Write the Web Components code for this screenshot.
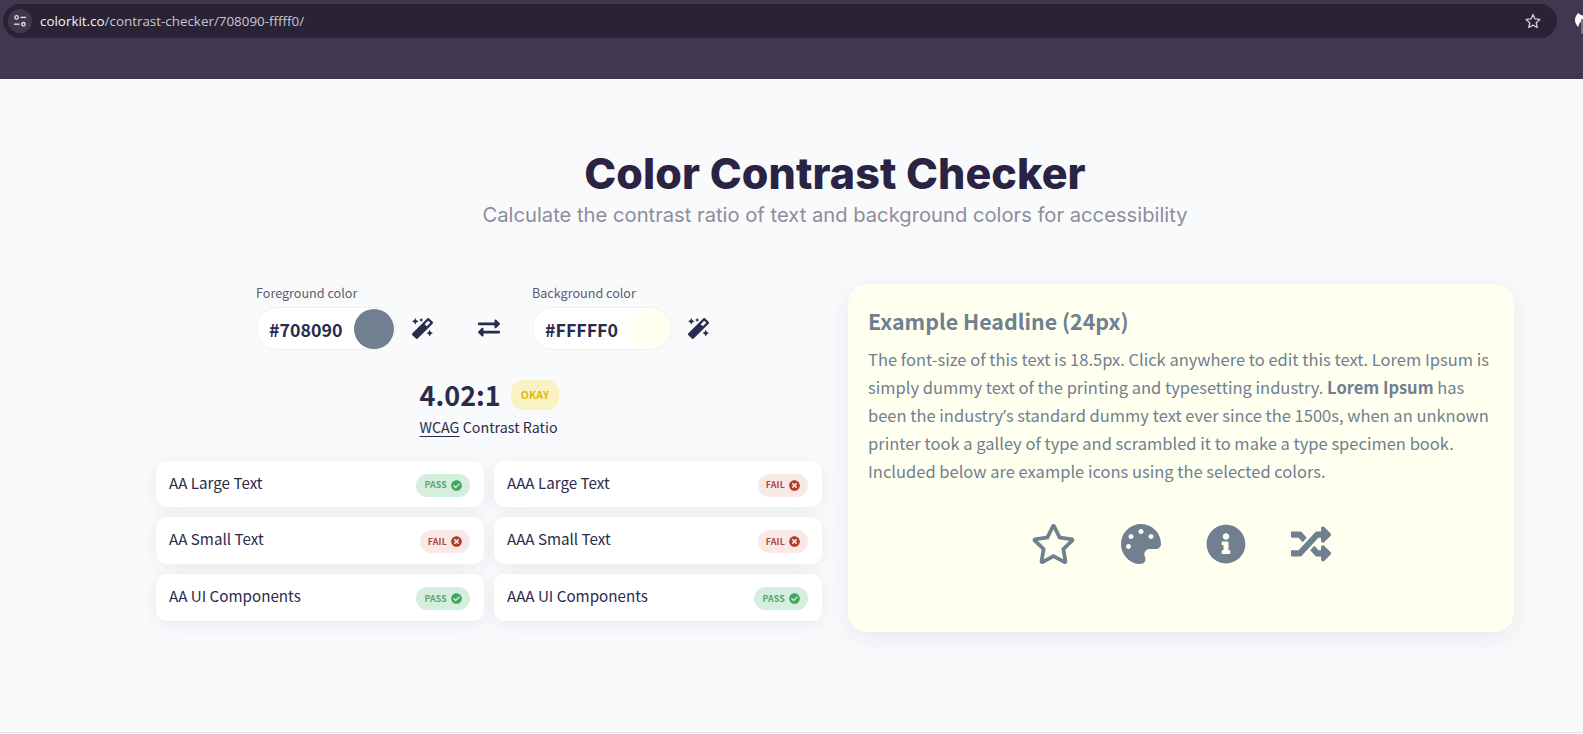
<!DOCTYPE html>
<html lang="en">
<head>
<meta charset="utf-8">
<title>Color Contrast Checker</title>
<style>
  html, body { margin: 0; height: 100%; }
  body {
    height: 734px;
    overflow: hidden;
    background: #f9fafc;
    font-family: "Noto Sans CJK SC", "Noto Sans", sans-serif;
    color: #2b2a4c;
  }
</style>
</head>
<body>
<browser-bar url-host="colorkit.co" url-path="/contrast-checker/708090-fffff0/"></browser-bar>
<page-hero heading="Color Contrast Checker" sub="Calculate the contrast ratio of text and background colors for accessibility"></page-hero>
<checker-layout>
  <checker-panel slot="left"></checker-panel>
  <preview-card slot="right"></preview-card>
</checker-layout>
<page-foot></page-foot>

<script>
const ICONS = {
  check: [512, 'M504 256c0 136.967-111.033 248-248 248S8 392.967 8 256 119.033 8 256 8s248 111.033 248 248zM227.314 387.314l184-184c6.248-6.248 6.248-16.379 0-22.627l-22.627-22.627c-6.248-6.249-16.379-6.249-22.628 0L216 308.118l-70.059-70.059c-6.248-6.248-16.379-6.248-22.628 0l-22.627 22.627c-6.248 6.248-6.248 16.379 0 22.627l104 104c6.249 6.249 16.379 6.249 22.628.001z'],
  times: [512, 'M256 8C119 8 8 119 8 256s111 248 248 248 248-111 248-248S393 8 256 8zm121.6 313.1c4.7 4.7 4.7 12.3 0 17L338 377.6c-4.7 4.7-12.3 4.7-17 0L256 312l-65.1 65.6c-4.7 4.7-12.3 4.7-17 0L134.4 338c-4.7-4.7-4.7-12.3 0-17l65.6-65-65.6-65.1c-4.7-4.7-4.7-12.3 0-17l39.6-39.6c4.7-4.7 12.3-4.7 17 0l65 65.7 65.1-65.6c4.7-4.7 12.3-4.7 17 0l39.6 39.6c4.7 4.7 4.7 12.3 0 17L312 256l65.6 65.1z'],
  star: [576, 'M528.1 171.5L382 150.2 316.7 17.8c-11.7-23.6-45.6-23.9-57.4 0L194 150.2 47.9 171.5c-26.2 3.8-36.7 36.1-17.7 54.6l105.7 103-25 145.5c-4.5 26.3 23.2 46 46.4 33.7L288 439.6l130.7 68.7c23.2 12.2 50.9-7.4 46.4-33.7l-25-145.5 105.7-103c19-18.5 8.5-50.8-17.7-54.6zM388.6 312.3l23.7 138.4L288 385.4l-124.3 65.3 23.7-138.4-100.6-98 139-20.2 62.2-126 62.2 126 139 20.2-100.6 98z'],
  palette: [512, 'M204.3 5C104.9 24.4 24.8 104.3 5.2 203.4c-37 187 131.7 326.4 258.8 306.7 41.2-6.4 61.4-54.6 42.5-91.7-23.1-45.4 9.9-98.4 60.9-98.4h79.7c35.8 0 64.8-29.6 64.9-65.3C511.5 97.1 368.1-26.9 204.3 5zM96 320c-17.7 0-32-14.3-32-32s14.3-32 32-32 32 14.3 32 32-14.3 32-32 32zm32-128c-17.7 0-32-14.3-32-32s14.3-32 32-32 32 14.3 32 32-14.3 32-32 32zm128-64c-17.7 0-32-14.3-32-32s14.3-32 32-32 32 14.3 32 32-14.3 32-32 32zm128 64c-17.7 0-32-14.3-32-32s14.3-32 32-32 32 14.3 32 32-14.3 32-32 32z'],
  info: [512, 'M256 8C119.043 8 8 119.083 8 256c0 136.997 111.043 248 248 248s248-111.003 248-248C504 119.083 392.957 8 256 8zm0 110c23.196 0 42 18.804 42 42s-18.804 42-42 42-42-18.804-42-42 18.804-42 42-42zm56 254c0 6.627-5.373 12-12 12h-88c-6.627 0-12-5.373-12-12v-24c0-6.627 5.373-12 12-12h12v-64h-12c-6.627 0-12-5.373-12-12v-24c0-6.627 5.373-12 12-12h64c6.627 0 12 5.373 12 12v100h12c6.627 0 12 5.373 12 12v24z'],
  random: [512, 'M504.971 359.029c9.373 9.373 9.373 24.569 0 33.941l-80 79.984c-15.01 15.01-40.971 4.49-40.971-16.971V416h-58.785a12.004 12.004 0 0 1-8.773-3.812l-70.556-75.596 53.333-57.143L352 336h32v-39.981c0-21.438 25.943-31.998 40.971-16.971l80 79.981zM12 176h84l52.781 56.551 53.333-57.143-70.556-75.596A11.999 11.999 0 0 0 122.785 96H12c-6.627 0-12 5.373-12 12v56c0 6.627 5.373 12 12 12zm372 0v39.984c0 21.46 25.961 31.98 40.971 16.971l80-79.984c9.373-9.373 9.373-24.569 0-33.941l-80-79.981C409.943 24.021 384 34.582 384 56.019V96h-58.785a12.004 12.004 0 0 0-8.773 3.812L96 336H12c-6.627 0-12 5.373-12 12v56c0 6.627 5.373 12 12 12h110.785c3.326 0 6.503-1.381 8.773-3.812L352 176h32z'],
  exchange: [512, 'M0 168v-16c0-13.255 10.745-24 24-24h360V80c0-21.367 25.899-32.042 40.971-16.971l80 80c9.372 9.373 9.372 24.569 0 33.941l-80 80C409.956 271.982 384 261.456 384 240v-48H24c-13.255 0-24-10.745-24-24zm488 152H128v-48c0-21.314-25.862-32.08-40.971-16.971l-80 80c-9.372 9.373-9.372 24.569 0 33.941l80 80C102.057 463.997 128 453.437 128 432v-48h360c13.255 0 24-10.745 24-24v-16c0-13.255-10.745-24-24-24z'],
  magic: [512, 'M224 96l16-32 32-16-32-16-16-32-16 32-32 16 32 16 16 32zM80 160l26.66-53.33L160 80l-53.34-26.67L80 0 53.34 53.33 0 80l53.34 26.67L80 160zm352 128l-26.66 53.33L352 368l53.34 26.67L432 448l26.66-53.33L512 368l-53.34-26.67L432 288zm70.62-193.77L417.77 9.38C411.53 3.12 403.34 0 395.15 0c-8.19 0-16.38 3.12-22.63 9.38L9.38 372.52c-12.5 12.5-12.5 32.76 0 45.25l84.85 84.85c6.25 6.25 14.44 9.37 22.62 9.37 8.19 0 16.38-3.12 22.63-9.37l363.14-363.15c12.5-12.48 12.5-32.75 0-45.24zM359.45 203.46l-50.91-50.91 86.6-86.6 50.91 50.91-86.6 86.6z']
};

// Solid icon helper, size is the height in px, width follows the glyph
function icon(name, size) {
  const [w, d] = ICONS[name];
  return `<svg xmlns="http://www.w3.org/2000/svg" viewBox="0 0 ${w} 512" width="${w * size / 512}" height="${size}" fill="currentColor" style="display:block;flex:none"><path d="${d}"/></svg>`;
}

class BrowserBar extends HTMLElement {
  connectedCallback() {
    this.attachShadow({ mode: 'open' }).innerHTML = `
      <style>
        :host { display: block; height: 79px; background: #3f384f; padding: 4px 0 0 3px; box-sizing: border-box; position: relative; overflow: hidden; }
        .pill { width: 1554px; height: 34px; box-sizing: border-box; background: #2a2335; border-radius: 17px; display: flex; align-items: center; padding: 0 16px 0 5px; }
        .site { width: 24px; height: 24px; border-radius: 50%; background: #3f384f; display: flex; align-items: center; justify-content: center; color: #e6e3ea; }
        .url { margin-left: 8px; font: 13.4px/20px "Open Sans", sans-serif; color: #c9c6d2; white-space: nowrap; flex: 1; }
        .url b { font-weight: 400; color: #f6f4f8; }
        .star { color: #cfcbd6; }
        .ext { position: absolute; left: 1575px; top: 13px; }
      </style>
      <div class="pill">
        <span class="site">
          <svg width="14" height="14" viewBox="0 0 14 14" fill="none" stroke="currentColor" stroke-width="1.3">
            <circle cx="3.6" cy="3.4" r="1.7"/><path d="M7.4 3.4H13"/>
            <circle cx="10.4" cy="10.2" r="1.7"/><path d="M1 10.2H6.6"/>
          </svg>
        </span>
        <span class="url"><b>${this.getAttribute('url-host')}</b>${this.getAttribute('url-path')}</span>
        <svg class="star" width="16" height="16" viewBox="0 0 16 16" fill="none" stroke="currentColor" stroke-width="1.3" stroke-linejoin="round"><path d="M8 1.4l2 4.5 4.9.5-3.7 3.3 1.1 4.8L8 12.1l-4.3 2.4 1.1-4.8L1.100 6.400 6 5.900z"/></svg>
      </div>
      <svg class="ext" width="8" height="21" viewBox="0 0 8 21"><path d="M3.500 0C1.500 1.500 0 4 0 7c0 3 1.500 5.500 3.500 7 .2-3 1.500-5.500 4.500-6.500V2.500C6.500 2.500 4.500 1.500 3.500 0z" fill="#fff"/><rect x="6" y="6" width="2" height="15" fill="#77737f"/></svg>`;
  }
}
customElements.define('browser-bar', BrowserBar);

class PageHero extends HTMLElement {
  connectedCallback() {
    this.attachShadow({ mode: 'open' }).innerHTML = `
      <style>
        :host { display: block; margin-left: 156px; width: 1358px; padding-top: 69px; text-align: center; }
        h1 { margin: 0; font: 800 43px/50px Inter, sans-serif; color: #2a2344; letter-spacing: .1px; }
        p { margin: 3px 0 0; font: 400 20.2px/27px Inter, sans-serif; color: #8f8c9c; }
      </style>
      <h1>${this.getAttribute('heading')}</h1>
      <p>${this.getAttribute('sub')}</p>`;
  }
}
customElements.define('page-hero', PageHero);

class CheckerLayout extends HTMLElement {
  connectedCallback() {
    this.attachShadow({ mode: 'open' }).innerHTML = `
      <style>
        :host { display: grid; grid-template-columns: 666px 666px; column-gap: 26px; margin: 56px 0 0 156px; width: 1358px; }
      </style>
      <slot name="left"></slot>
      <slot name="right"></slot>`;
  }
}
customElements.define('checker-layout', CheckerLayout);

class ColorField extends HTMLElement {
  connectedCallback() {
    const value = this.getAttribute('value');
    const swatch = this.getAttribute('swatch');
    this.attachShadow({ mode: 'open' }).innerHTML = `
      <style>
        :host { display: block; }
        label { display: block; font-size: 12.600px; line-height: 18px; color: #5d5b70; margin: 0 0 5px 0; }
        .row { display: flex; align-items: center; gap: 16px; }
        .pill { width: 140px; height: 43px; box-sizing: border-box; border: 1px solid #eff0f3; border-radius: 22px; background: #fff; display: flex; align-items: center; justify-content: space-between; padding: 0 1px 0 12px; }
        .hex { font-size: 17.800px; font-weight: 700; line-height: 24px; color: #2b2a4c; }
        .dot { width: 40px; height: 40px; border-radius: 50%; background: ${swatch}; }
        .wand { color: #2b2a4c; }
      </style>
      <label>${this.getAttribute('label')}</label>
      <div class="row">
        <div class="pill"><span class="hex">${value}</span><span class="dot"></span></div>
        <span class="wand">${icon('magic', 21)}</span>
      </div>`;
  }
}
customElements.define('color-field', ColorField);

class StatusBadge extends HTMLElement {
  connectedCallback() {
    const pass = this.getAttribute('status') === 'pass';
    this.attachShadow({ mode: 'open' }).innerHTML = `
      <style>
        :host { display: flex; align-items: center; gap: 4px; height: 23px; padding: 0 8px; border-radius: 12px; font-size: 8.800px; font-weight: 700; letter-spacing: .2px; background: ${pass ? '#d5eedd' : '#f8e8e6'}; color: ${pass ? '#5aa86e' : '#ab4a3f'}; }
        span { line-height: 14px; }
        i { display: block; color: ${pass ? '#3fa85c' : '#b53a2a'}; }
      </style>
      <span>${pass ? 'PASS' : 'FAIL'}</span><i>${icon(pass ? 'check' : 'times', 11)}</i>`;
  }
}
customElements.define('status-badge', StatusBadge);

class CheckRow extends HTMLElement {
  connectedCallback() {
    this.attachShadow({ mode: 'open' }).innerHTML = `
      <style>
        :host { display: flex; align-items: center; justify-content: space-between; box-sizing: border-box; padding: 0 14px 0 13px; background: #fff; border-radius: 11px; box-shadow: 0 4px 16px rgba(40, 40, 70, .07); }
        .name { align-self: flex-start; font-size: 15.200px; line-height: 22px; color: #2b2a4c; margin-top: 10px; }
        status-badge { margin-top: 2px; }
      </style>
      <span class="name">${this.getAttribute('name')}</span>
      <status-badge status="${this.getAttribute('status')}"></status-badge>`;
  }
}
customElements.define('check-row', CheckRow);

class CheckerPanel extends HTMLElement {
  connectedCallback() {
    this.attachShadow({ mode: 'open' }).innerHTML = `
      <style>
        :host { display: block; }
        .fields { display: flex; padding-left: 100px; }
        .swap { color: #2b2a4c; margin: 33px 32px 0 45px; }
        .ratio { width: 139px; margin: 27px auto 0; }
        .top { display: flex; align-items: center; gap: 10px; }
        .num { font-size: 27px; font-weight: 700; line-height: 36px; color: #2b2a4c; }
        .okay { height: 30px; padding: 0 10px; border-radius: 12px; background: #fbf2c4; color: #e0b70c; font-size: 10.500px; font-weight: 700; line-height: 30px; letter-spacing: .2px; }
        .wcag { font-size: 14.300px; line-height: 22px; margin-top: 3px; color: #2b2a4c; white-space: nowrap; }
        u { text-underline-offset: 3px; }
        .grid { display: grid; grid-template-columns: 1fr 1fr; grid-template-rows: 46px 47px 47px; gap: 10px; margin-top: 23px; }
      </style>
      <div class="fields">
        <color-field label="Foreground color" value="#708090" swatch="#708090"></color-field>
        <span class="swap">${icon('exchange', 22)}</span>
        <color-field label="Background color" value="#FFFFF0" swatch="#fffff0"></color-field>
      </div>
      <div class="ratio">
        <div class="top"><span class="num">4.02:1</span><span class="okay">OKAY</span></div>
        <div class="wcag"><u>WCAG</u> Contrast Ratio</div>
      </div>
      <div class="grid">
        <check-row name="AA Large Text" status="pass"></check-row>
        <check-row name="AAA Large Text" status="fail"></check-row>
        <check-row name="AA Small Text" status="fail"></check-row>
        <check-row name="AAA Small Text" status="fail"></check-row>
        <check-row name="AA UI Components" status="pass"></check-row>
        <check-row name="AAA UI Components" status="pass"></check-row>
      </div>`;
  }
}
customElements.define('checker-panel', CheckerPanel);

class PreviewCard extends HTMLElement {
  connectedCallback() {
    this.attachShadow({ mode: 'open' }).innerHTML = `
      <style>
        :host { display: block; height: 348px; box-sizing: border-box; padding: 19px 20px 20px; background: #fffff0; border-radius: 20px; box-shadow: 0 6px 24px rgba(40, 40, 70, .08); color: #708090; }
        h2 { margin: 0; font-size: 21.400px; line-height: 36px; font-weight: 700; }
        p { margin: 7px 0 0; font-size: 16.500px; line-height: 27.750px; white-space: nowrap; }
        .apos { font-family: "Noto Sans", sans-serif; font-size: 15.500px; }
        .icons { display: flex; justify-content: center; align-items: center; gap: 45px; margin-top: 38px; }
      </style>
      <h2>Example Headline (24px)</h2>
      <p>The font-size of this text is 18.5px. Click anywhere to edit this text. Lorem Ipsum is<br>simply dummy text of the printing and typesetting industry. <b>Lorem Ipsum</b> has<br>been the industry<span class="apos">’</span>s standard dummy text ever since the 1500s, when an unknown<br>printer took a galley of type and scrambled it to make a type specimen book.<br>Included below are example icons using the selected colors.</p>
      <div class="icons">${icon('star', 40)}${icon('palette', 40)}${icon('info', 40)}${icon('random', 40)}</div>`;
  }
}
customElements.define('preview-card', PreviewCard);

class PageFoot extends HTMLElement {
  connectedCallback() {
    this.attachShadow({ mode: 'open' }).innerHTML = `<style>:host { display: block; margin-top: 100px; border-top: 1px solid #e6e7ea; height: 8px; }</style>`;
  }
}
customElements.define('page-foot', PageFoot);
</script>
</body>
</html>
